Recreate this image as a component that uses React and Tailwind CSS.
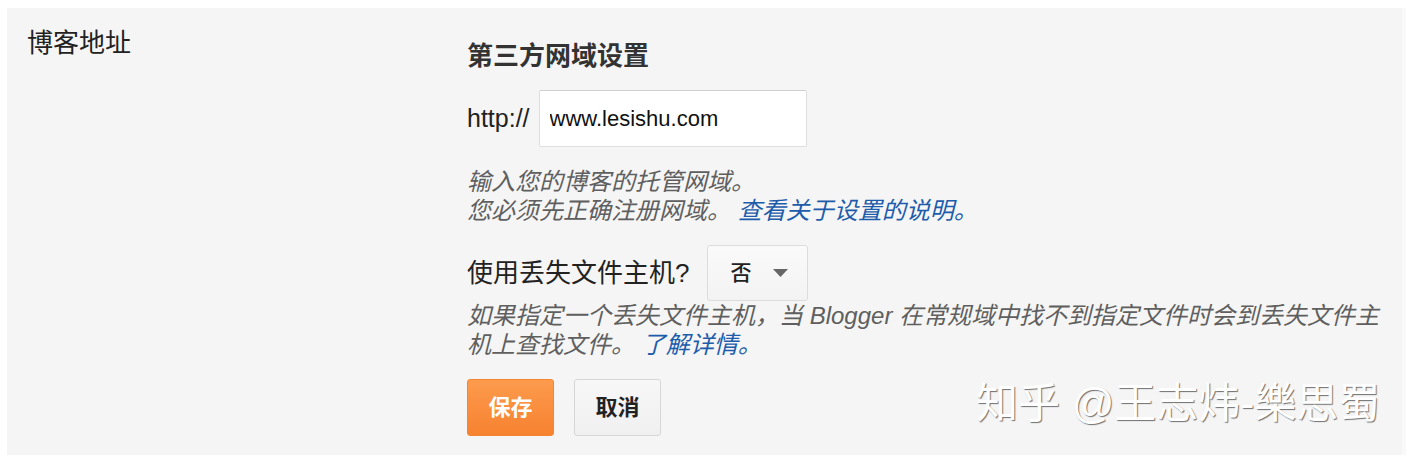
import React, { useState } from "react";

const font = "font-['Liberation_Sans','Noto_Sans_CJK_SC',sans-serif]";

export default function App() {
  const [domain, setDomain] = useState("www.lesishu.com");

  return (
    <div className={`relative w-full h-[462px] bg-white pt-[8px] pl-[7px] pr-[8px] ${font}`}>
      <div className="flex h-[447px] bg-[#f5f5f5] border-r-[4px] border-[#f9f9f9]">
        {/* 左侧标签 */}
        <div className="w-[460px] pl-[20px] pt-[20px]">
          <div className="text-[26px] leading-[30px] text-[#222]">博客地址</div>
        </div>

        {/* 设置内容 */}
        <div className="w-[920px] pt-[33px]">
          <h3 className="text-[26px] leading-[30px] font-bold text-[#333]">第三方网域设置</h3>

          <div className="flex items-center mt-[19px]">
            <span className="text-[25px] text-[#222] mr-[9px]">http://</span>
            <input
              type="text"
              value={domain}
              onChange={(e) => setDomain(e.target.value)}
              className="w-[268px] h-[57px] bg-white border border-[#dedede] border-t-[#cfcfcf] rounded-[2px] px-[10px] text-[22px] text-[#111] outline-none"
            />
          </div>

          <p className="mt-[20px] text-[24px] leading-[29px] italic text-[#5f5f5f]">
            输入您的博客的托管网域。
            <br />
            您必须先正确注册网域。{" "}
            <a href="#" className="inline-block text-[#1d5cab]">查看关于设置的说明。</a>
          </p>

          <div className="flex items-center mt-[20px]">
            <span className="text-[26px] text-[#222] mr-[18px]">使用丢失文件主机?</span>
            <button
              type="button"
              className="flex items-center w-[101px] h-[56px] bg-gradient-to-b from-[#fafafa] to-[#f3f3f3] border border-[#dcdcdc] rounded-[3px] pl-[22px]"
            >
              <span className="text-[21px] font-medium text-[#222]">否</span>
              <svg width="15" height="8" viewBox="0 0 15 8" className="ml-[22px]">
                <path d="M0 0H15L7.5 8Z" fill="#666" />
              </svg>
            </button>
          </div>

          <p className="text-[24px] leading-[29px] italic text-[#5f5f5f]">
            如果指定一个丢失文件主机，当 Blogger 在常规域中找不到指定文件时会到丢失文件主机上查找文件。{" "}
            <a href="#" className="inline-block text-[#1d5cab]">了解详情。</a>
          </p>

          <div className="flex gap-[20px] mt-[20px]">
            <button
              type="button"
              className="w-[87px] h-[57px] rounded-[3px] border border-[#f38630] bg-gradient-to-b from-[#fd9b4d] to-[#f6822f] text-white text-[22px] font-bold"
            >
              保存
            </button>
            <button
              type="button"
              className="w-[87px] h-[57px] rounded-[3px] border border-[#d6d6d6] bg-gradient-to-b from-[#f7f7f7] to-[#f0f0f0] text-[#222] text-[22px] font-bold"
            >
              取消
            </button>
          </div>
        </div>
      </div>

      {/* 水印 */}
      <div className="absolute left-[976px] top-[379px] text-[42px] leading-[50px] text-white [text-shadow:1px_1px_1px_rgba(0,0,0,0.55)] whitespace-nowrap">
        知乎 @王志炜-樂思蜀
      </div>
    </div>
  );
}
